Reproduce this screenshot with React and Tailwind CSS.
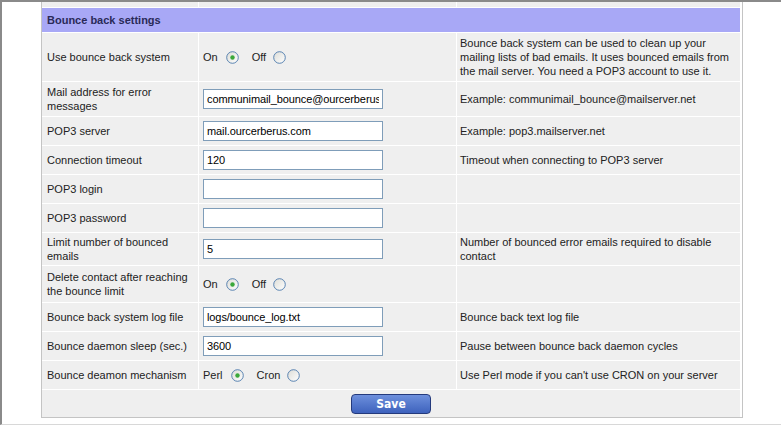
import React from 'react';

const Radio = ({ checked }) => (
  <svg width="13" height="13" viewBox="0 0 13 13" className="shrink-0">
    <defs>
      <linearGradient id="rg" x1="0" y1="0" x2="1" y2="1">
        <stop offset="0" stopColor="#dcdcd6" />
        <stop offset="1" stopColor="#ffffff" />
      </linearGradient>
    </defs>
    <circle cx="6.5" cy="6.5" r="5.8" fill="url(#rg)" stroke="#4a78ac" strokeWidth="0.9" />
    {checked && <circle cx="6.5" cy="6.5" r="2.2" fill="#3aa83a" />}
  </svg>
);

const OnOff = ({ a = 'On', b = 'Off', first = true }) => (
  <div className="flex items-center">
    <span className="mr-[8px]">{a}</span>
    <Radio checked={first} />
    <span className="ml-[13px] mr-[7px]">{b}</span>
    <Radio checked={!first} />
  </div>
);

const Field = ({ value }) => (
  <input
    type="text"
    defaultValue={value}
    className="w-[180px] h-[20px] border border-[#7f9db9] bg-white px-[3px] text-[11px] tracking-[-0.1px] text-black outline-none"
    style={{ fontFamily: '"Liberation Sans", Arial, sans-serif' }}
  />
);

const rows = [
  {
    label: 'Use bounce back system',
    h: 'h-[48px]',
    field: <OnOff />,
    help: 'Bounce back system can be used to clean up your mailing lists of bad emails. It uses bounced emails from the mail server. You need a POP3 account to use it.',
  },
  { label: 'Mail address for error messages', h: 'h-[34px]', field: <Field value="communimail_bounce@ourcerberus.com" />, help: 'Example: communimail_bounce@mailserver.net' },
  { label: 'POP3 server', h: 'h-[28px]', field: <Field value="mail.ourcerberus.com" />, help: 'Example: pop3.mailserver.net' },
  { label: 'Connection timeout', h: 'h-[28px]', field: <Field value="120" />, help: 'Timeout when connecting to POP3 server' },
  { label: 'POP3 login', h: 'h-[28px]', field: <Field value="" />, help: '' },
  { label: 'POP3 password', h: 'h-[28px]', field: <Field value="" />, help: '' },
  { label: 'Limit number of bounced emails', h: 'h-[32px]', field: <Field value="5" />, help: 'Number of bounced error emails required to disable contact' },
  { label: 'Delete contact after reaching the bounce limit', h: 'h-[36px]', field: <OnOff />, help: '' },
  { label: 'Bounce back system log file', h: 'h-[28px]', field: <Field value="logs/bounce_log.txt" />, help: 'Bounce back text log file' },
  { label: 'Bounce daemon sleep (sec.)', h: 'h-[28px]', field: <Field value="3600" />, help: 'Pause between bounce back daemon cycles' },
  { label: 'Bounce deamon mechanism', h: 'h-[28px]', field: <OnOff a="Perl" b="Cron" />, help: "Use Perl mode if you can't use CRON on your server" },
];

export default function App() {
  return (
    <div
      className="w-[781px] h-[427px] bg-white overflow-hidden text-[11px] leading-[14px] text-[#222]"
      style={{ fontFamily: '"Liberation Sans", Arial, sans-serif' }}
    >
      <div className="h-[425px] border-t-2 border-l-2 border-[#8a8a8a] border-b border-b-[#d8d8d8]">
        <div className="ml-[39px] w-[700px] grid grid-cols-[156px_257px_283px] gap-px bg-white border-l border-r border-b border-[#c4c4c4] box-content">
          <div className="h-[5px] bg-[#efefef]" />
          <div className="h-[5px] bg-[#efefef]" />
          <div className="h-[5px] bg-[#efefef]" />

          <div className="col-span-3 h-[24px] bg-[#a8a8f6] flex items-center pl-[5px] font-bold text-[#2a2a58]">
            Bounce back settings
          </div>

          {rows.map((r) => (
            <React.Fragment key={r.label}>
              <div className={`${r.h} bg-[#efefef] flex items-center pl-[5px] pr-[6px]`}>{r.label}</div>
              <div className={`${r.h} bg-[#efefef] flex items-center pl-[4px]`}>{r.field}</div>
              <div className={`${r.h} bg-[#efefef] flex items-center pl-[3px] pr-[8px]`}>{r.help}</div>
            </React.Fragment>
          ))}

          <div className="col-span-3 h-[27px] bg-[#efefef] flex items-center justify-center">
            <button className="w-[80px] h-[20px] rounded-[4px] border border-[#243a7c] bg-gradient-to-b from-[#6d8fdc] to-[#3e62bd] text-white font-bold text-[12px] font-['DejaVu_Sans',sans-serif] font-stretch-condensed">
              Save
            </button>
          </div>
        </div>
      </div>
    </div>
  );
}
